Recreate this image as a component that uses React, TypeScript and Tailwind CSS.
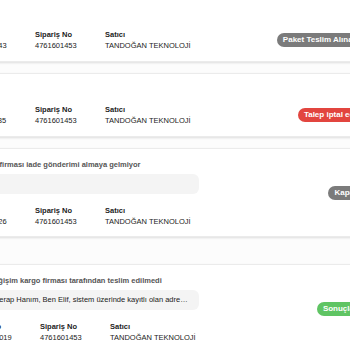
import React from "react";

type Talep = {
  id: string;
  no: string;
  siparisNo: string;
  satici: string;
  baslik?: string;
  mesaj?: string;
  durum: string;
  renk: string;
};

const talepler: Talep[] = [
  {
    id: "1",
    no: "2654891243",
    siparisNo: "4761601453",
    satici: "TANDOĞAN TEKNOLOJİ",
    durum: "Paket Teslim Alınacak",
    renk: "bg-[#7b7b7b]",
  },
  {
    id: "2",
    no: "2654891135",
    siparisNo: "4761601453",
    satici: "TANDOĞAN TEKNOLOJİ",
    durum: "Talep iptal edildi",
    renk: "bg-[#e2453f]",
  },
  {
    id: "3",
    no: "2654890926",
    siparisNo: "4761601453",
    satici: "TANDOĞAN TEKNOLOJİ",
    baslik: "Bu kargo firması iade gönderimi almaya gelmiyor",
    mesaj: "Tamam",
    durum: "Kapandı",
    renk: "bg-[#7b7b7b]",
  },
  {
    id: "4",
    no: "2661752019",
    siparisNo: "4761601453",
    satici: "TANDOĞAN TEKNOLOJİ",
    baslik: "Ürün değişim kargo firması tarafından teslim edilmedi",
    mesaj: "Sayın Serap Hanım, Ben Elif, sistem üzerinde kayıtlı olan adresinize ulaşılamadı",
    durum: "Sonuçlandı",
    renk: "bg-[#5fc463]",
  },
];

function Alan({ label, value, w }: { label: string; value: string; w: string }) {
  return (
    <div className={`${w} shrink-0 whitespace-nowrap`}>
      <div className="font-bold text-[#222] leading-[11px]">{label}</div>
      <div className="text-[#222] leading-[11px]">{value}</div>
    </div>
  );
}

function TalepKart({ t, kayik }: { t: Talep; kayik?: boolean }) {
  const detayli = !!t.baslik;
  return (
    <div
      className={`bg-white border border-[#ebebeb] shadow-[0_1px_2px_rgba(0,0,0,0.12)] flex items-center justify-between pr-3 ${
        kayik ? "pl-[21px]" : "pl-4"
      } ${detayli ? "pt-[10px] pb-[9px]" : "pt-[30px] pb-[10px]"}`}
    >
      <div className="flex flex-col">
        {t.baslik && (
          <div className="font-bold text-[#555] leading-[11px] whitespace-nowrap">{t.baslik}</div>
        )}
        {detayli && (
          <div
            className={`mt-[4px] mb-[11px] h-[20px] rounded-md bg-[#f4f4f4] pl-[3px] pr-[9px] flex items-center ${
              kayik ? "w-[229px]" : "w-[234px]"
            }`}
          >
            <span className="truncate text-[#222]">{t.mesaj}</span>
          </div>
        )}
        <div className="flex">
          <Alan label="Talep No" value={t.no} w="w-[70px]" />
          <Alan label="Sipariş No" value={t.siparisNo} w="w-[70px]" />
          <Alan label="Satıcı" value={t.satici} w="w-[110px]" />
        </div>
      </div>
      <span
        className={`${t.renk} h-[14px] px-[6px] rounded-full text-white font-bold text-[8px] leading-[14px] whitespace-nowrap`}
      >
        {t.durum}
      </span>
    </div>
  );
}

export default function App() {
  return (
    <div
      className="w-[350px] h-[350px] overflow-hidden bg-[#fcfcfc] text-[7.5px]"
      style={{ fontFamily: '"Liberation Sans", Arial, sans-serif' }}
    >
      <div className="ml-[-52px] mt-[-2px] w-[437px] flex flex-col">
        <TalepKart t={talepler[0]} />
        <div className="mt-[11px]">
          <TalepKart t={talepler[1]} />
        </div>
        <div className="mt-[11px]">
          <TalepKart t={talepler[2]} />
        </div>
        <div className="mt-[27px]">
          <TalepKart t={talepler[3]} kayik />
        </div>
      </div>
    </div>
  );
}
